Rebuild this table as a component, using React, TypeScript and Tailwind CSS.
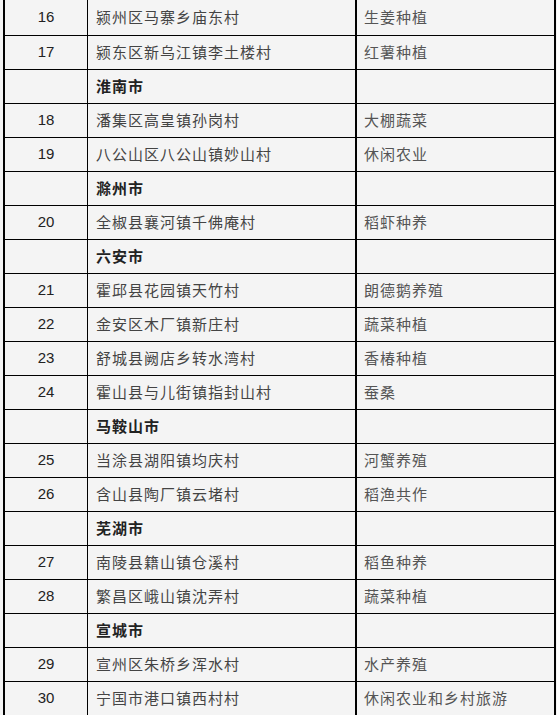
const rows: { no?: string; name: string; type?: string; city?: boolean }[] = [
  { no: "16", name: "颍州区马寨乡庙东村", type: "生姜种植" },
  { no: "17", name: "颍东区新乌江镇李土楼村", type: "红薯种植" },
  { name: "淮南市", city: true },
  { no: "18", name: "潘集区高皇镇孙岗村", type: "大棚蔬菜" },
  { no: "19", name: "八公山区八公山镇妙山村", type: "休闲农业" },
  { name: "滁州市", city: true },
  { no: "20", name: "全椒县襄河镇千佛庵村", type: "稻虾种养" },
  { name: "六安市", city: true },
  { no: "21", name: "霍邱县花园镇天竹村", type: "朗德鹅养殖" },
  { no: "22", name: "金安区木厂镇新庄村", type: "蔬菜种植" },
  { no: "23", name: "舒城县阙店乡转水湾村", type: "香椿种植" },
  { no: "24", name: "霍山县与儿街镇指封山村", type: "蚕桑" },
  { name: "马鞍山市", city: true },
  { no: "25", name: "当涂县湖阳镇均庆村", type: "河蟹养殖" },
  { no: "26", name: "含山县陶厂镇云堵村", type: "稻渔共作" },
  { name: "芜湖市", city: true },
  { no: "27", name: "南陵县籍山镇仓溪村", type: "稻鱼种养" },
  { no: "28", name: "繁昌区峨山镇沈弄村", type: "蔬菜种植" },
  { name: "宣城市", city: true },
  { no: "29", name: "宣州区朱桥乡浑水村", type: "水产养殖" },
  { no: "30", name: "宁国市港口镇西村村", type: "休闲农业和乡村旅游" },
];

const cjk = "font-['Noto_Sans_CJK_SC',sans-serif]";

export default function App() {
  return (
    <div className="w-[557px] h-[715px] overflow-hidden bg-[#f4f4f4]">
      <div className="ml-[3px] w-[553px] border-x-2 border-black">
        {rows.map((r, i) => (
          <div
            key={i}
            className={`flex ${i === 0 ? "h-[35px]" : "h-[34px] border-t border-black"}`}
          >
            <div className="w-[83px] shrink-0 border-r border-black flex items-center justify-center font-['Liberation_Sans',sans-serif] text-[15px] text-[#222]">
              {r.no}
            </div>
            <div
              className={`w-[269px] shrink-0 border-r-2 border-black flex items-center pl-[8px] ${cjk} text-[15px] tracking-[1px] ${
                r.city ? "font-bold text-[#222]" : "text-[#444]"
              }`}
            >
              {r.name}
            </div>
            <div className={`flex-1 flex items-center pl-[7px] ${cjk} text-[15px] tracking-[1px] text-[#555]`}>
              {r.type}
            </div>
          </div>
        ))}
      </div>
    </div>
  );
}
